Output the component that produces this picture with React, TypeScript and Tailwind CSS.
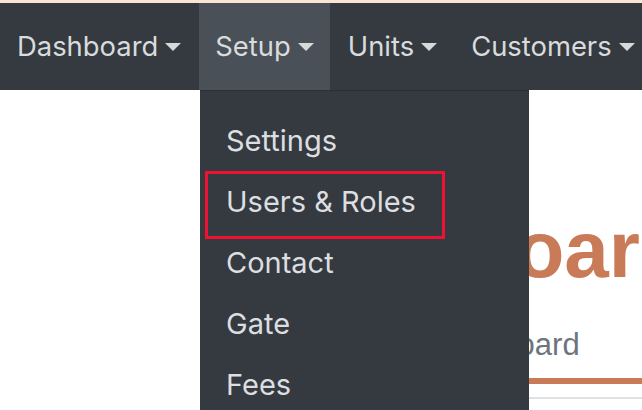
import React from "react";

const navItems = [
  { label: "Dashboard", active: false },
  { label: "Setup", active: true },
  { label: "Units", active: false },
  { label: "Customers", active: false },
];

const setupItems = ["Settings", "Users & Roles", "Contact", "Gate", "Fees"];

function Caret() {
  return (
    <span className="ml-[7px] inline-block h-0 w-0 border-x-[8.5px] border-t-[8px] border-x-transparent border-t-[#d6d8da] align-middle" />
  );
}

export default function App() {
  return (
    <div className="relative h-[410px] w-[642px] overflow-hidden bg-white font-['Inter','Liberation_Sans',sans-serif]">
      <div className="h-[3px] bg-[#fce4d2]" />
      <nav className="flex h-[87px] items-stretch bg-[#343a40] pl-[1px]">
        {navItems.map((item) => (
          <div
            key={item.label}
            className={
              "mr-[2px] flex shrink-0 items-center px-4 text-[27.4px] text-[#d9dbdd] " +
              (item.active ? "bg-[#495057]" : "")
            }
          >
            <span>{item.label}</span>
            <Caret />
          </div>
        ))}
      </nav>

      {/* page content behind the open menu */}
      <main className="pl-[271px] font-['Liberation_Sans',sans-serif]">
        <h1 className="mt-[120px] whitespace-nowrap text-[80px] font-bold leading-[80px] text-[#c97b57]">
          Dashboard
        </h1>
        <div className="mt-[39px] border-b-[6px] border-[#c97b57] pb-[18px]">
          <span className="ml-[157px] block text-[31px] leading-[31px] text-[#6c757d]">Dashboard</span>
        </div>
        <div className="mt-[13px] h-[2px] bg-[#dee2e6]" />
      </main>

      {/* open Setup dropdown */}
      <div className="absolute left-[200px] top-[90px] w-[329px] border-t border-[#2a2f34] bg-[#343a40] pt-[19px]">
        {setupItems.map((label) => (
          <div key={label} className="flex h-[61px] items-center pl-[26px] text-[29px] text-[#dcdee0]">
            {label}
          </div>
        ))}
      </div>

      {/* highlight box */}
      <div className="absolute left-[205px] top-[171px] h-[68px] w-[240px] border-[3px] border-[#ee1133]" />
    </div>
  );
}
